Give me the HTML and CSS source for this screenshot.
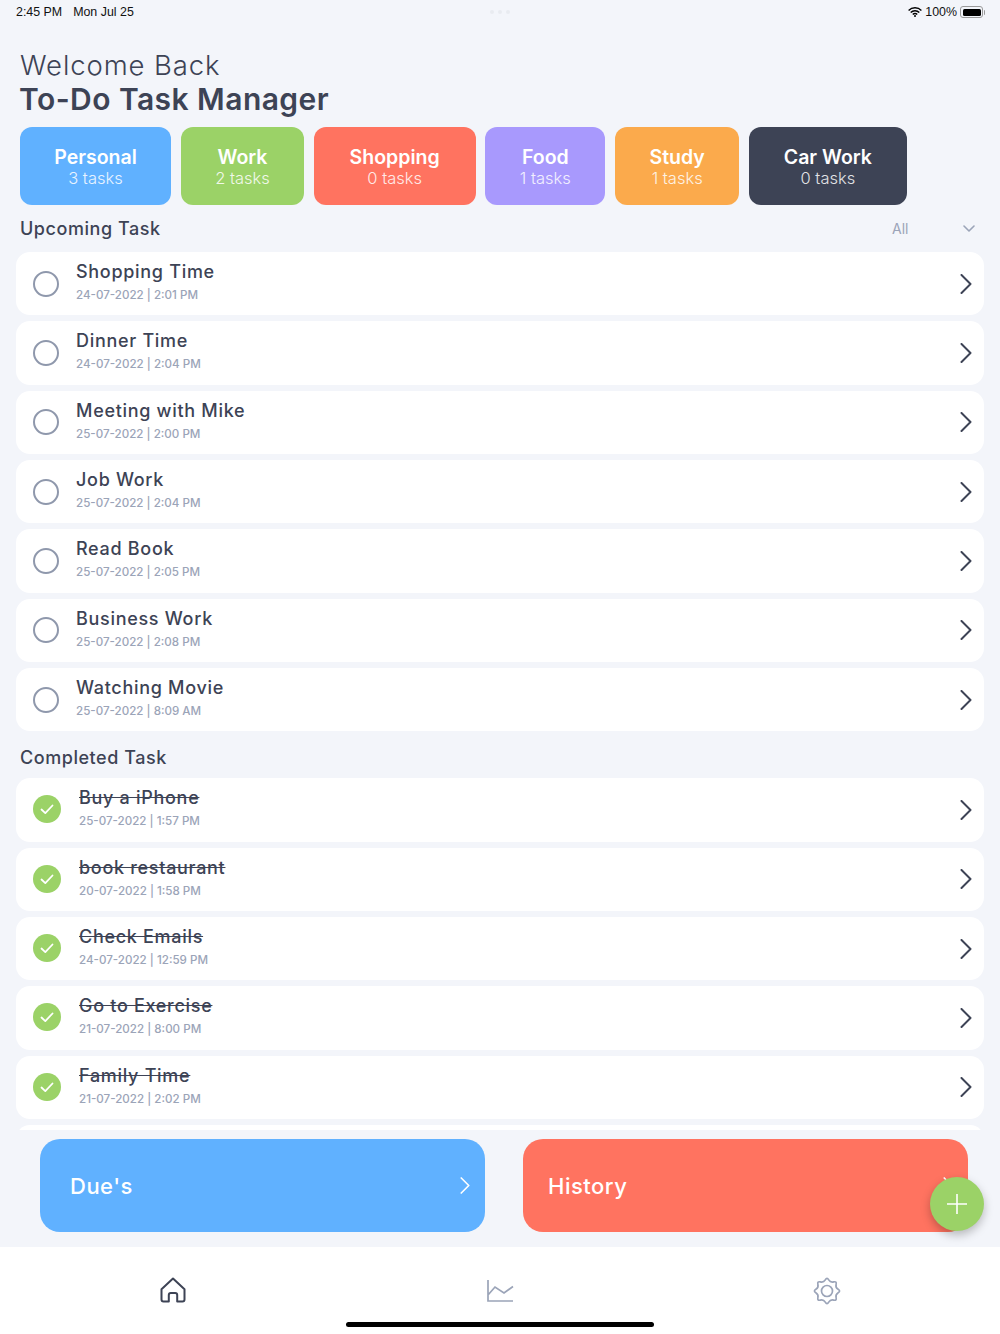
FILE: index.html
```html
<!DOCTYPE html>
<html lang="en">
  <head>
    <meta charset="UTF-8" />
    <title>To-Do Task Manager</title>
    <link rel="stylesheet" href="styles.css">
  </head>
  <body>
    <svg class="sprites" width="0" height="0">
      <symbol id="chevron" viewBox="0 0 12 20">
        <path d="M1.5 1l9 9-9 9" fill="none" stroke="currentColor" stroke-width="2" stroke-linecap="round" stroke-linejoin="round" />
      </symbol>
      <symbol id="check" viewBox="0 0 28 28">
        <circle cx="14" cy="14" r="14" fill="#9bd267" />
        <path d="M8.5 14.5l3.8 3.6 7.2-7.6" fill="none" stroke="#fff" stroke-width="1.8" stroke-linecap="round" stroke-linejoin="round" />
      </symbol>
    </svg>

    <header class="status-bar">
      <div class="status-time"><span>2:45 PM</span><span>Mon Jul 25</span></div>
      <div class="status-dots"><i></i><i></i><i></i></div>
      <div class="status-right">
        <svg class="wifi" viewBox="0 0 14 10" width="14" height="10">
          <path d="M.6 3.4a9 9 0 0 1 12.8 0M2.7 5.5a6 6 0 0 1 8.6 0M4.8 7.4a3 3 0 0 1 4.4 0" fill="none" stroke="#000" stroke-width="1.4" />
          <circle cx="7" cy="9" r="1" fill="#000" />
        </svg>
        <span>100%</span>
        <div class="battery"><div class="battery-fill"></div></div>
      </div>
    </header>

    <main>
      <div class="greeting">
        <div class="greeting-top">Welcome Back</div>
        <h1>To-Do Task Manager</h1>
      </div>

      <div class="categories">
        <div class="category cat-personal"><b>Personal</b><span>3 tasks</span></div>
        <div class="category cat-work"><b>Work</b><span>2 tasks</span></div>
        <div class="category cat-shopping"><b>Shopping</b><span>0 tasks</span></div>
        <div class="category cat-food"><b>Food</b><span>1 tasks</span></div>
        <div class="category cat-study"><b>Study</b><span>1 tasks</span></div>
        <div class="category cat-car"><b>Car Work</b><span>0 tasks</span></div>
      </div>

      <div class="section-head">
        <h2>Upcoming Task</h2>
        <div class="filter">
          <span>All</span>
          <svg viewBox="0 0 12 7" width="12" height="7">
            <path d="M1 1l5 5 5-5" fill="none" stroke="currentColor" stroke-width="1.6" stroke-linecap="round" stroke-linejoin="round" />
          </svg>
        </div>
      </div>

      <div class="task-list">
        <div class="task">
          <div class="radio"></div>
          <div class="task-text"><div class="task-title">Shopping Time</div><div class="task-date">24-07-2022 | 2:01 PM</div></div>
          <svg class="chevron"><use href="#chevron" /></svg>
        </div>
        <div class="task">
          <div class="radio"></div>
          <div class="task-text"><div class="task-title">Dinner Time</div><div class="task-date">24-07-2022 | 2:04 PM</div></div>
          <svg class="chevron"><use href="#chevron" /></svg>
        </div>
        <div class="task">
          <div class="radio"></div>
          <div class="task-text"><div class="task-title">Meeting with Mike</div><div class="task-date">25-07-2022 | 2:00 PM</div></div>
          <svg class="chevron"><use href="#chevron" /></svg>
        </div>
        <div class="task">
          <div class="radio"></div>
          <div class="task-text"><div class="task-title">Job Work</div><div class="task-date">25-07-2022 | 2:04 PM</div></div>
          <svg class="chevron"><use href="#chevron" /></svg>
        </div>
        <div class="task">
          <div class="radio"></div>
          <div class="task-text"><div class="task-title">Read Book</div><div class="task-date">25-07-2022 | 2:05 PM</div></div>
          <svg class="chevron"><use href="#chevron" /></svg>
        </div>
        <div class="task">
          <div class="radio"></div>
          <div class="task-text"><div class="task-title">Business Work</div><div class="task-date">25-07-2022 | 2:08 PM</div></div>
          <svg class="chevron"><use href="#chevron" /></svg>
        </div>
        <div class="task">
          <div class="radio"></div>
          <div class="task-text"><div class="task-title">Watching Movie</div><div class="task-date">25-07-2022 | 8:09 AM</div></div>
          <svg class="chevron"><use href="#chevron" /></svg>
        </div>
      </div>

      <div class="section-head section-completed">
        <h2>Completed Task</h2>
      </div>

      <div class="task-list task-list-done">
        <div class="task done">
          <svg class="tick"><use href="#check" /></svg>
          <div class="task-text"><div class="task-title">Buy a iPhone</div><div class="task-date">25-07-2022 | 1:57 PM</div></div>
          <svg class="chevron"><use href="#chevron" /></svg>
        </div>
        <div class="task done">
          <svg class="tick"><use href="#check" /></svg>
          <div class="task-text"><div class="task-title">book restaurant</div><div class="task-date">20-07-2022 | 1:58 PM</div></div>
          <svg class="chevron"><use href="#chevron" /></svg>
        </div>
        <div class="task done">
          <svg class="tick"><use href="#check" /></svg>
          <div class="task-text"><div class="task-title">Check Emails</div><div class="task-date">24-07-2022 | 12:59 PM</div></div>
          <svg class="chevron"><use href="#chevron" /></svg>
        </div>
        <div class="task done">
          <svg class="tick"><use href="#check" /></svg>
          <div class="task-text"><div class="task-title">Go to Exercise</div><div class="task-date">21-07-2022 | 8:00 PM</div></div>
          <svg class="chevron"><use href="#chevron" /></svg>
        </div>
        <div class="task done">
          <svg class="tick"><use href="#check" /></svg>
          <div class="task-text"><div class="task-title">Family Time</div><div class="task-date">21-07-2022 | 2:02 PM</div></div>
          <svg class="chevron"><use href="#chevron" /></svg>
        </div>
        <div class="task done"></div>
      </div>

      <div class="actions">
        <div class="action action-due">
          <span>Due's</span>
          <svg class="action-chevron"><use href="#chevron" /></svg>
        </div>
        <div class="action action-history">
          <span>History</span>
          <svg class="action-chevron"><use href="#chevron" /></svg>
        </div>
      </div>
    </main>

    <nav class="tab-bar">
      <svg viewBox="0 0 26 26" width="26" height="26" class="tab-home">
        <path d="M1.5 12.2L13 1.6l11.5 10.6v10.4a2 2 0 0 1-2 2h-5.3V18a2 2 0 0 0-2-2h-4.4a2 2 0 0 0-2 2v6.6H3.5a2 2 0 0 1-2-2z" fill="none" stroke="currentColor" stroke-width="2" stroke-linejoin="round" />
      </svg>
      <svg viewBox="0 0 28 24" width="28" height="24" class="tab-chart">
        <path d="M2 1v21h25M2 16l7-8 9 6 9-6.5" fill="none" stroke="currentColor" stroke-width="1.7" />
      </svg>
      <svg viewBox="0 0 28 28" width="28" height="28" class="tab-gear">
        <path d="M12.28 2.85Q14 0 15.72 2.85T20.67 4.9T23.1 7.33T25.15 12.28T25.15 15.72T23.1 20.67T20.67 23.1T15.72 25.15T12.28 25.15T7.33 23.1T4.9 20.67T2.85 15.72T2.85 12.28T4.9 7.33T7.33 4.9T12.28 2.85z" fill="none" stroke="currentColor" stroke-width="1.7" />
        <circle cx="14" cy="14" r="5.5" fill="none" stroke="currentColor" stroke-width="1.7" />
      </svg>
      <div class="home-indicator"></div>
    </nav>

    <button class="fab" type="button">
      <svg viewBox="0 0 20 20" width="20" height="20">
        <path d="M10 0v20M0 10h20" stroke="#fff" stroke-width="1.6" />
      </svg>
    </button>
  </body>
</html>
```

FILE: styles.css
```css
:root {
  --background-color: #f3f5fa;
  --text-color: #3d4355;
  --muted-color: #9ba4b8;

  --blue: #60b1ff;
  --green: #9bd267;
  --red: #ff7360;
  --purple: #a899fd;
  --orange: #fbaa4c;
}

* {
  box-sizing: border-box;
}

html,
body {
  height: 100%;
  margin: 0;
}

body {
  position: relative;
  width: 1000px;
  height: 1334px;
  overflow: hidden;
  display: flex;
  flex-direction: column;
  font-family: Inter, "Open Sans", sans-serif;
  background-color: var(--background-color);
  color: var(--text-color);
}

h1,
h2 {
  margin: 0;
}

.sprites {
  position: absolute;
}

/* status bar */
.status-bar {
  flex: none;
  height: 24px;
  padding: 0 15px 0 16px;
  display: flex;
  align-items: center;
  justify-content: space-between;
  font-family: "Liberation Sans", sans-serif;
  font-size: 12.4px;
  color: #111;
}

.status-time {
  display: flex;
  gap: 11px;
}

.status-dots {
  display: flex;
  gap: 4px;
  position: absolute;
  left: 490px;
  top: 10px;
}

.status-dots i {
  width: 4px;
  height: 4px;
  border-radius: 50%;
  background-color: #e9ebf0;
}

.status-right {
  display: flex;
  align-items: center;
  gap: 3px;
}

.battery {
  position: relative;
  width: 23px;
  height: 12px;
  margin-right: 2px;
  padding: 1.5px;
  border: 1px solid #9a9a9a;
  border-radius: 3px;
}

.battery::after {
  content: '';
  position: absolute;
  right: -3px;
  top: 2.5px;
  width: 1.5px;
  height: 5px;
  border-radius: 0 1px 1px 0;
  background-color: #9a9a9a;
}

.battery-fill {
  height: 100%;
  border-radius: 1.5px;
  background-color: #000;
}

/* header */
.greeting {
  padding: 25px 20px 0;
}

.greeting-top {
  font-size: 27.5px;
  font-weight: 300;
  line-height: 32px;
  letter-spacing: 0.9px;
}

h1 {
  margin-left: -1px;
  font-size: 30px;
  font-weight: 600;
  line-height: 36px;
  letter-spacing: 0.45px;
}

/* category cards */
.categories {
  margin-top: 10px;
  padding: 0 20px 0 19.7px;
  display: flex;
  gap: 9.7px;
}

.category {
  height: 78px;
  border-radius: 12px;
  display: flex;
  flex-direction: column;
  align-items: center;
  justify-content: center;
  color: #fff;
}

.category b {
  font-size: 19.5px;
  font-weight: 600;
  line-height: 23px;
}

.category span {
  font-size: 16.5px;
  font-weight: 300;
  line-height: 18px;
  opacity: 0.85;
}

.cat-personal { width: 151.6px; background-color: var(--blue); }
.cat-work { width: 123px; background-color: var(--green); }
.cat-shopping { width: 162px; background-color: var(--red); }
.cat-food { width: 120px; background-color: var(--purple); }
.cat-study { width: 124.3px; background-color: var(--orange); }
.cat-car { width: 157.7px; background-color: var(--text-color); }

/* sections */
.section-head {
  height: 47px;
  padding: 0 25px 0 20px;
  display: flex;
  align-items: center;
  justify-content: space-between;
}

h2 {
  font-size: 18px;
  font-weight: 500;
  letter-spacing: 0.55px;
}

.filter {
  width: 83px;
  display: flex;
  align-items: center;
  justify-content: space-between;
  font-size: 14px;
  color: var(--muted-color);
}

.section-completed {
  padding-top: 6px;
}

.task-list {
  padding: 0 16px;
  display: flex;
  flex-direction: column;
  gap: 6px;
}

.task-list-done {
  height: 352px;
  overflow: hidden;
}

.task {
  flex: none;
  height: 63.33px;
  padding: 0 12px 0 17px;
  border-radius: 14px;
  display: flex;
  align-items: center;
  background-color: #fff;
}

.radio {
  flex: none;
  width: 26px;
  height: 26px;
  border: 2px solid #8f98ac;
  border-radius: 50%;
}

.tick {
  flex: none;
  width: 28px;
  height: 28px;
  margin-top: -1px;
}

.task-text {
  flex: 1;
  margin-left: 17px;
  margin-top: -4px;
}

.done .task-text {
  margin-left: 18px;
}

.task-title {
  font-size: 18px;
  font-weight: 500;
  line-height: 24px;
  letter-spacing: 0.7px;
}

.done .task-title {
  text-decoration: line-through;
}

.task-date {
  margin-top: 3px;
  font-size: 11.6px;
  font-weight: 500;
  line-height: 16px;
  color: var(--muted-color);
}

.chevron {
  flex: none;
  width: 12px;
  height: 20px;
  color: var(--text-color);
}

/* bottom buttons */
.actions {
  margin-top: 9px;
  padding-left: 40px;
  display: flex;
  gap: 38px;
}

.action {
  flex: none;
  width: 445px;
  height: 93px;
  border-radius: 20px;
  display: flex;
  align-items: center;
  justify-content: space-between;
  color: #fff;
  font-size: 22px;
  font-weight: 500;
  letter-spacing: 0.5px;
}

.action-due {
  padding: 0 15px 0 30px;
  background-color: var(--blue);
}

.action-history {
  padding: 0 15px 0 25px;
  background-color: var(--red);
}

.action-chevron {
  width: 10px;
  height: 17px;
}

.tab-bar {
  position: absolute;
  left: 0;
  right: 0;
  top: 1247px;
  height: 87px;
  padding-top: 30px;
  display: flex;
  align-items: flex-start;
  background-color: #fff;
  color: var(--muted-color);
}

.tab-home {
  margin-left: 160px;
  color: var(--text-color);
}

.tab-chart {
  margin-left: 300px;
  margin-top: 2px;
}

.tab-gear {
  margin-left: 299px;
}

.home-indicator {
  position: absolute;
  left: 346px;
  bottom: 7px;
  width: 308px;
  height: 5px;
  border-radius: 3px;
  background-color: #000;
}

.fab {
  position: absolute;
  left: 930px;
  top: 1177px;
  width: 54px;
  height: 54px;
  padding: 0;
  border: 0;
  border-radius: 50%;
  display: flex;
  align-items: center;
  justify-content: center;
  background-color: var(--green);
  box-shadow: 0 4px 10px #00000040;
}
```
